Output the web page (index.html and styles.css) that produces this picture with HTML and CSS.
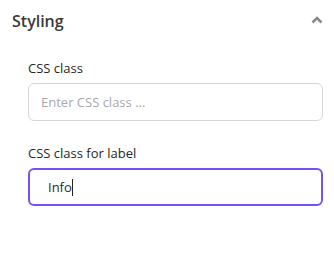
FILE: index.html
```html
<!DOCTYPE html>
<html>
<head>
<meta charset="utf-8">
<link rel="stylesheet" href="styles.css">
</head>
<body>
<div class="panel">
  <div class="header">
    <span class="title">Styling</span>
    <svg class="chevron" width="12" height="8" viewBox="0 0 12 8"><path d="M1.5 6.5 L6 2 L10.5 6.5" fill="none" stroke="#8a8a8a" stroke-width="2.6" stroke-linecap="butt"/></svg>
  </div>
  <div class="body">
    <div class="field">
      <label class="label">CSS class</label>
      <div class="input"><span class="placeholder">Enter CSS class ...</span></div>
    </div>
    <div class="field">
      <label class="label">CSS class for label</label>
      <div class="input focused"><span class="value">Info</span><span class="caret"></span></div>
    </div>
  </div>
</div>
</body>
</html>
```
FILE: styles.css
```css
html, body {
  margin: 0;
  padding: 0;
  background: #ffffff;
}
body {
  font-family: "Open Sans", "Liberation Sans", sans-serif;
  color: #333;
}
.panel {
  width: 334px;
}
.header {
  display: flex;
  align-items: center;
  justify-content: space-between;
  padding: 7px 11px 0 12px;
  height: 28px;
}
.title {
  font-size: 16px;
  font-weight: 600;
  color: #3a3a3a;
}
.chevron {
  display: block;
  margin-top: -3px;
}
.body {
  padding: 24px 11px 0 28px;
  display: flex;
  flex-direction: column;
  gap: 23px;
}
.field {
  display: flex;
  flex-direction: column;
  gap: 6px;
}
.label {
  font-size: 13px;
  color: #262626;
  line-height: 18px;
}
.input {
  height: 38px;
  box-sizing: border-box;
  border: 1px solid #d6d6d6;
  border-radius: 6px;
  display: flex;
  align-items: center;
  padding: 0 12px;
  font-size: 13px;
}
.placeholder {
  color: #a8a8a8;
}
.focused {
  border: 2px solid #7b4ff5;
  padding-left: 18px;
}
.value {
  color: #2a2a2a;
}
.caret {
  display: inline-block;
  width: 1px;
  height: 17px;
  background: #222;
}
```
